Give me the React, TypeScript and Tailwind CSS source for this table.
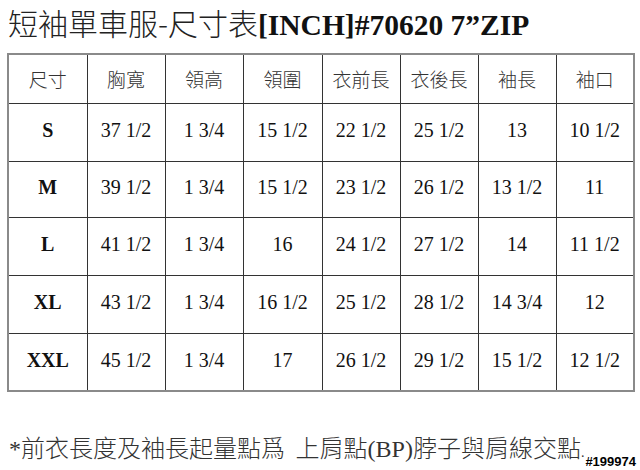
import React from "react";

const cjk = "font-['Noto_Sans_CJK_TC','Noto_Sans_CJK_SC',sans-serif]";
const serif = "font-['Liberation_Serif','Noto_Sans_CJK_TC',serif]";

const headers = ["尺寸", "胸寬", "領高", "領圍", "衣前長", "衣後長", "袖長", "袖口"];
const rows: string[][] = [
  ["S", "37 1/2", "1 3/4", "15 1/2", "22 1/2", "25 1/2", "13", "10 1/2"],
  ["M", "39 1/2", "1 3/4", "15 1/2", "23 1/2", "26 1/2", "13 1/2", "11"],
  ["L", "41 1/2", "1 3/4", "16", "24 1/2", "27 1/2", "14", "11 1/2"],
  ["XL", "43 1/2", "1 3/4", "16 1/2", "25 1/2", "28 1/2", "14 3/4", "12"],
  ["XXL", "45 1/2", "1 3/4", "17", "26 1/2", "29 1/2", "15 1/2", "12 1/2"],
];
const rowH = ["h-[58px]", "h-[56px]", "h-[58px]", "h-[58px]", "h-[58px]"];
const widths = ["w-[79px]", "w-[78px]", "w-[78px]", "w-[79px]", "w-[78px]", "w-[78px]", "w-[78px]", "w-[78px]"];

export default function App() {
  return (
    <div className="relative w-[640px] h-[470px] bg-white overflow-hidden">
      <div className="pl-[8px] h-[53px]">
        <div className="whitespace-nowrap text-[30px] leading-[44px] text-[#222]">
          <span className={`${cjk} font-light`}>短袖單車服-尺寸表</span>
          <span className={`${serif} font-bold text-[29.5px] text-[#111]`}>[INCH]#70620 7”ZIP</span>
        </div>
      </div>
      <div className="pl-[7px]">
        <table className="table-fixed border-collapse w-[626px] border-2 border-[#8a8a8a]">
          <colgroup>
            {widths.map((w, i) => (
              <col key={i} className={w} />
            ))}
          </colgroup>
          <thead>
            <tr className="h-[49px]">
              {headers.map((h, i) => (
                <th
                  key={i}
                  className={`${cjk} font-light text-[19px] text-[#333] border border-[#333] text-center align-middle p-0`}
                >
                  {h}
                </th>
              ))}
            </tr>
          </thead>
          <tbody>
            {rows.map((r, ri) => (
              <tr key={ri} className={rowH[ri]}>
                {r.map((c, ci) => (
                  <td
                    key={ci}
                    className={`${serif} text-[20px] text-[#111] border border-[#333] text-center align-middle p-0 pb-[4px] ${ci === 0 ? "font-bold" : ""}`}
                  >
                    {c}
                  </td>
                ))}
              </tr>
            ))}
          </tbody>
        </table>
      </div>
      <div className="pl-[9px] pt-[40px] whitespace-nowrap text-[24px] leading-[30px] text-[#333]">
        <span className={serif}>*</span>
        <span className={`${cjk} font-light`}>前衣長度及袖長起量點爲&nbsp;&nbsp;上肩點</span>
        <span className={serif}>(BP)</span>
        <span className={`${cjk} font-light`}>脖子與肩線交點</span>
        <span className={`${serif} text-[14px]`}>.</span>
      </div>
      <div className="absolute right-[4px] bottom-[2px] font-['Liberation_Sans',sans-serif] font-bold text-[13px] leading-[13px] text-black [text-shadow:0_0_1px_#fff,0_0_1px_#fff]">
        #199974
      </div>
    </div>
  );
}
